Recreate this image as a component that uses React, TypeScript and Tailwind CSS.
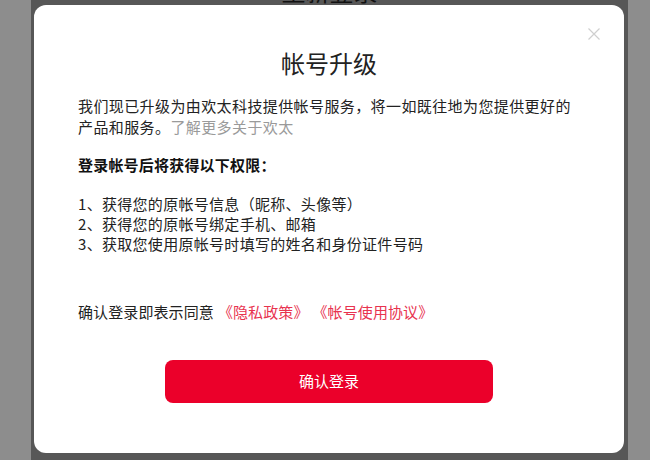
import React from "react";

export default function App() {
  const font = { fontFamily: '"Noto Sans CJK SC", "Noto Sans", sans-serif' };
  return (
    <div
      className="relative w-[650px] h-[460px] overflow-hidden bg-[#8d8d8d] flex"
      style={font}
    >
      <div className="ml-[31px] w-[597px] h-full bg-[#575757] flex flex-col items-center">
        <div className="mt-[-25px] text-[24px] leading-[32px] text-[#111]">重新登录</div>
      </div>

      <div className="absolute left-[34px] top-[5px] w-[590px] h-[448px] bg-white rounded-[12px] flex flex-col px-[44px]">
        <button className="absolute right-[24px] top-[23px] w-[12px] h-[12px] text-[#cfcfcf]">
          <svg viewBox="0 0 12 12" width="12" height="12" fill="none" stroke="currentColor" strokeWidth="1.2">
            <path d="M0.5 0.5 L11.5 11.5 M11.5 0.5 L0.5 11.5" />
          </svg>
        </button>

        <h1 className="mt-[42px] text-center text-[24px] leading-[32px] text-[#222] font-normal">帐号升级</h1>

        <p className="mt-[16px] text-[15px] leading-[21px] tracking-[0.4px] text-[#222]">
          我们现已升级为由欢太科技提供帐号服务，将一如既往地为您提供更好的产品和服务。
          <span className="text-[#9a9a9a]">了解更多关于欢太</span>
        </p>

        <p className="mt-[17px] text-[15px] leading-[21px] tracking-[0.2px] font-bold text-[#111]">
          登录帐号后将获得以下权限：
        </p>

        <ul className="mt-[19px] text-[15px] leading-[20px] tracking-[0.3px] text-[#222]">
          <li>1、获得您的原帐号信息（昵称、头像等）</li>
          <li>2、获得您的原帐号绑定手机、邮箱</li>
          <li>3、获取您使用原帐号时填写的姓名和身份证件号码</li>
        </ul>

        <p className="mt-[47px] text-[15px] leading-[21px] tracking-[0.1px] text-[#222] flex">
          <span>确认登录即表示同意</span>
          <span className="ml-[4px] text-[#e8334f]">《隐私政策》</span>
          <span className="ml-[4px] text-[#e8334f]">《帐号使用协议》</span>
        </p>

        <div className="mt-[38px] flex justify-center">
          <button className="w-[328px] h-[43px] rounded-[8px] bg-[#eb002a] text-white text-[15px] flex items-center justify-center">
            确认登录
          </button>
        </div>
      </div>
    </div>
  );
}
